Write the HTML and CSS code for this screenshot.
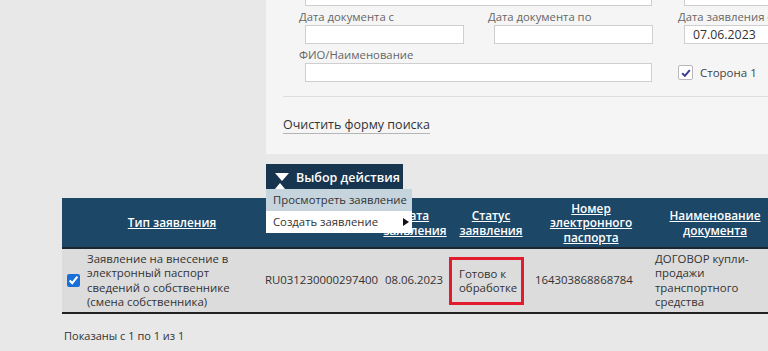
FILE: index.html
```html
<!DOCTYPE html>
<html lang="ru">
<head>
<meta charset="utf-8">
<title>Поиск заявлений</title>
<link rel="stylesheet" href="styles.css">
</head>
<body>
<div class="page">
  <section class="search">
    <div class="fields">
      <div class="field span2"><input class="inp" type="text"></div>
      <div class="field"><input class="inp" type="text"></div>
      <div class="field"><label class="lbl">Дата документа с</label><input class="inp" type="text"></div>
      <div class="field"><label class="lbl">Дата документа по</label><input class="inp" type="text"></div>
      <div class="field"><label class="lbl">Дата заявления с</label><input class="inp" type="text" value="07.06.2023"></div>
      <div class="field span2"><label class="lbl">ФИО/Наименование</label><input class="inp" type="text"></div>
      <div class="field check-field">
        <span class="cb"><svg width="12" height="12" viewBox="0 0 12 12"><path d="M2.2 6.2 L4.9 8.9 L9.8 3.2" fill="none" stroke="#3a3d8f" stroke-width="2"/></svg></span>
        <span class="cb-text">Сторона 1</span>
      </div>
    </div>
    <div class="sep"></div>
    <div class="clear-row"><a class="clear">Очистить форму поиска</a></div>
  </section>

  <div class="actions">
    <button class="act-btn" type="button"><span class="tri"></span>Выбор действия</button>
    <ul class="menu">
      <li class="menu-item active">Просмотреть заявление</li>
      <li class="menu-item sub">Создать заявление<span class="sub-arrow"></span></li>
    </ul>
  </div>

  <table class="grid">
    <colgroup>
      <col class="c-chk"><col class="c-type"><col class="c-num"><col class="c-date"><col class="c-status"><col class="c-pass"><col class="c-doc">
    </colgroup>
    <thead>
      <tr>
        <th></th>
        <th><a>Тип заявления</a></th>
        <th></th>
        <th><a>Дата<br>заявления</a></th>
        <th><a>Статус<br>заявления</a></th>
        <th><a>Номер<br>электронного<br>паспорта</a></th>
        <th><a>Наименование<br>документа</a></th>
      </tr>
    </thead>
    <tbody>
      <tr>
        <td class="td-chk"><input type="checkbox" checked class="row-cb"></td>
        <td class="td-type">Заявление на внесение в<br>электронный паспорт<br>сведений о собственнике<br>(смена собственника)</td>
        <td class="td-num">RU031230000297400</td>
        <td class="td-date">08.06.2023</td>
        <td class="td-status"><span class="mark">Готово к<br>обработке</span></td>
        <td class="td-pass">164303868868784</td>
        <td class="td-doc">ДОГОВОР купли-<br>продажи<br>транспортного<br>средства</td>
      </tr>
    </tbody>
  </table>

  <p class="footer">Показаны с 1 по 1 из 1</p>
</div>
</body>
</html>
```

FILE: styles.css
```css
html, body {
  margin: 0;
  padding: 0;
  overflow: hidden;
}
body {
  background: #e8e8e8;
  font-family: "Open Sans", "Noto Sans", sans-serif;
  color: #333;
  width: 768px;
  height: 351px;
}
.page {
  display: flex;
  flex-direction: column;
}

/* search panel */
.search {
  margin: -13px 0 0 266px;
  background: #f5f5f5;
  padding: 0 0 20px 0;
  overflow: hidden;
}
.fields {
  display: grid;
  grid-template-columns: 189px 190px 200px;
  row-gap: 3px;
  padding-left: 33px;
}
.field {
  display: flex;
  flex-direction: column;
}
.span2 { grid-column: span 2; }
.lbl {
  font-size: 11.3px;
  line-height: 16px;
  color: #666;
  white-space: nowrap;
}
.inp {
  box-sizing: border-box;
  height: 19px;
  width: 159px;
  margin: 0 0 0 6px;
  border: 1px solid #cfcfcf;
  background: #fff;
  font-family: inherit;
  font-size: 12.3px;
  color: #333;
  padding: 0 0 0 8px;
  outline: none;
}
.span2 .inp { width: 347px; }
.check-field {
  flex-direction: row;
  align-items: center;
  gap: 7px;
  margin-top: 16px;
  height: 19px;
}
.cb {
  box-sizing: border-box;
  width: 15px;
  height: 15px;
  border: 1px solid #b9b9b9;
  border-radius: 2px;
  background: #fff;
  display: flex;
  align-items: center;
  justify-content: center;
}
.cb svg { display: block; }
.cb-text {
  font-size: 11.5px;
  color: #444;
}
.sep {
  margin: 14px 0 0 17px;
  height: 1px;
  background: #dedede;
}
.clear-row {
  display: flex;
  margin: 19px 0 0 17px;
}
.clear {
  display: block;
  font-size: 12.5px;
  line-height: 17px;
  color: #333;
  border-bottom: 1px solid #b5b5b5;
}

/* actions */
.actions {
  position: relative;
  margin: 10px 0 0 266px;
  width: 146px;
}
.act-btn {
  box-sizing: border-box;
  width: 137px;
  height: 26px;
  display: flex;
  align-items: center;
  gap: 7px;
  padding: 0 0 0 9px;
  border: none;
  background: #17354f;
  color: #fff;
  font-family: inherit;
  font-size: 12.5px;
  font-weight: 600;
  white-space: nowrap;
}
.tri {
  width: 0;
  height: 0;
  border-left: 7px solid transparent;
  border-right: 7px solid transparent;
  border-top: 8px solid #fff;
}
.menu {
  position: absolute;
  top: 25px;
  left: 0;
  width: 146px;
  margin: 0;
  padding: 0;
  list-style: none;
  background: #fff;
  z-index: 5;
}
.menu::before {
  content: "";
  position: absolute;
  top: -6px;
  left: 9px;
  border-left: 5px solid transparent;
  border-right: 5px solid transparent;
  border-bottom: 6px solid #fff;
}
.menu-item {
  position: relative;
  height: 22px;
  line-height: 22px;
  padding: 0 0 0 7px;
  font-size: 11.3px;
  color: #333;
  white-space: nowrap;
}
.menu-item.active { background: #c6d4de; }
.sub-arrow {
  position: absolute;
  right: 3px;
  top: 7px;
  border-top: 4.5px solid transparent;
  border-bottom: 4.5px solid transparent;
  border-left: 6px solid #111;
}

/* table */
.grid {
  margin: 8px 0 0 62px;
  width: 719px;
  table-layout: fixed;
  border-collapse: collapse;
}
.c-chk { width: 23px; }
.c-type { width: 174px; }
.c-num { width: 122px; }
.c-date { width: 68px; }
.c-status { width: 84px; }
.c-pass { width: 116px; }
.c-doc { width: 132px; }
.grid th {
  height: 49px;
  padding: 0;
  background: #1c4767;
  border-bottom: 2px solid #1b2630;
  text-align: center;
  vertical-align: middle;
  font-size: 11.8px;
  line-height: 14.5px;
  font-weight: 600;
  color: #fff;
}
.grid th a {
  color: #fff;
  text-decoration: underline;
}
.grid td {
  height: 63px;
  padding: 0;
  background: #dcdcdc;
  border-bottom: 2px solid #222;
  vertical-align: middle;
  font-size: 11.4px;
  line-height: 14.5px;
  color: #333;
  white-space: nowrap;
}
.td-chk { padding-left: 4px !important; }
.row-cb {
  display: block;
  width: 13px;
  height: 13px;
  margin: 0 0 0 1px;
  accent-color: #1a6fd6;
}
.td-type { padding-left: 2px !important; }
.td-num { padding-left: 6px !important; }
.td-date { padding-left: 4px !important; }
.td-pass { padding-left: 2px !important; }
.td-doc { padding-left: 6px !important; }
.mark {
  display: inline-block;
  box-sizing: border-box;
  width: 75px;
  height: 48px;
  padding: 7px 0 0 7px;
  border: 3px solid #e21c2c;
}

.footer {
  margin: 14px 0 0 64px;
  font-size: 11px;
  line-height: 16px;
  color: #333;
}
```
